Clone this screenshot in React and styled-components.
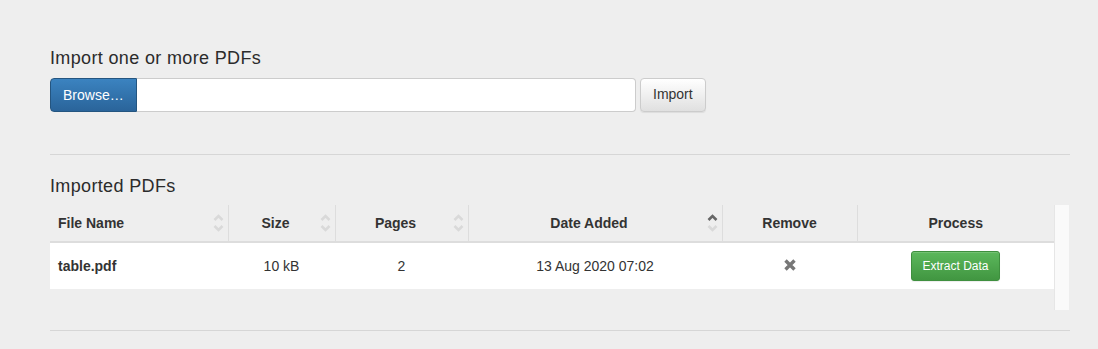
import React from "react";
import styled, { createGlobalStyle } from "styled-components";

const GlobalStyle = createGlobalStyle`
  body {
    margin: 0;
    background: #eeeeee;
    font-family: "Liberation Sans", Arial, sans-serif;
    font-size: 14px;
    color: #333;
  }
`;

const Page = styled.div`
  padding: 49px 28px 20px 50px;
  width: 1020px;
`;

const Heading = styled.h4`
  margin: 0 0 ${(p) => p.$gap || "9px"};
  font-size: 18px;
  font-weight: 500;
  line-height: 1.1;
  letter-spacing: 0.35px;
  color: #2b2b2b;
`;

const FormRow = styled.div`
  display: flex;
  align-items: stretch;
  gap: 4px;
  height: 34px;
`;

const InputGroup = styled.div`
  display: flex;
  width: 586px;
`;

const BrowseButton = styled.span`
  display: flex;
  align-items: center;
  padding: 0 12px;
  color: #fff;
  background: linear-gradient(#3b83c0, #2a649a);
  border: 1px solid #245580;
  border-radius: 4px 0 0 4px;
  white-space: nowrap;
`;

const FileInput = styled.div`
  flex: 1;
  background: #fff;
  border: 1px solid #ccc;
  border-left: none;
  border-radius: 0 4px 4px 0;
`;

const Button = styled.button`
  font-family: inherit;
  font-size: ${(p) => (p.$small ? "12px" : "14px")};
  line-height: ${(p) => (p.$small ? "1.5" : "1.42857")};
  padding: ${(p) => (p.$small ? "5px 10px" : "6px 12px")};
  border-radius: ${(p) => (p.$small ? "3px" : "4px")};
  color: ${(p) => (p.$success ? "#fff" : "#333")};
  border: 1px solid ${(p) => (p.$success ? "#3e8f3e" : "#ccc")};
  background: ${(p) =>
    p.$success
      ? "linear-gradient(#5cb85c, #419641)"
      : "linear-gradient(#ffffff, #e0e0e0)"};
  box-shadow: inset 0 1px 0 rgba(255, 255, 255, 0.15),
    0 1px 1px rgba(0, 0, 0, 0.075);
  cursor: pointer;
`;

const Rule = styled.hr`
  margin: ${(p) => p.$margin};
  border: 0;
  border-top: 1px solid #d6d6d6;
  height: 0;
`;

const TableWrap = styled.div`
  display: flex;
  align-items: flex-start;
`;

const Table = styled.table`
  width: 1004px;
  table-layout: fixed;
  border-collapse: collapse;
`;

const HeadCell = styled.th`
  position: relative;
  height: 36px;
  box-sizing: border-box;
  padding: ${(p) => (p.$sortable ? "8px 20px 8px 8px" : "8px")};
  text-align: ${(p) => p.$align || "center"};
  font-weight: bold;
  line-height: 20px;
  border-left: ${(p) => (p.$first ? "none" : "1px solid #dddddd")};
  border-bottom: 2px solid #dddddd;
`;

const SortIcon = styled.svg`
  position: absolute;
  right: 4px;
  top: 8px;
`;

const Row = styled.tr`
  background: #fff;
`;

const Cell = styled.td`
  height: 46px;
  box-sizing: border-box;
  padding: 8px;
  text-align: ${(p) => p.$align || "center"};
  font-weight: ${(p) => (p.$bold ? "bold" : "normal")};
  vertical-align: middle;
  line-height: 20px;
`;

const ScrollTrack = styled.div`
  width: 14px;
  height: 105px;
  background: #fafafa;
  border-left: 1px solid #e6e6e6;
`;

const Sort = ({ active }) => (
  <SortIcon width="11" height="20" viewBox="0 0 11 20" fill="none">
    <polyline
      points="1.5,7 5.5,3 9.5,7"
      stroke={active ? "#666" : "#d9d9d9"}
      strokeWidth="2.6"
    />
    <polyline
      points="1.5,13 5.5,17 9.5,13"
      stroke="#d9d9d9"
      strokeWidth="2.6"
    />
  </SortIcon>
);

const RemoveIcon = () => (
  <svg width="12" height="12" viewBox="0 0 12 12">
    <path
      d="M1.5 1.5 L10.5 10.5 M10.5 1.5 L1.5 10.5"
      stroke="#777"
      strokeWidth="3.4"
    />
  </svg>
);

const columns = [
  { label: "File Name", width: 178, sortable: true, align: "left" },
  { label: "Size", width: 107, sortable: true },
  { label: "Pages", width: 133, sortable: true },
  { label: "Date Added", width: 254, sortable: true, active: true },
  { label: "Remove", width: 135 },
  { label: "Process", width: 197 },
];

export default function App() {
  return (
    <>
      <GlobalStyle />
      <Page>
        <Heading>Import one or more PDFs</Heading>
        <FormRow>
          <InputGroup>
            <BrowseButton>Browse…</BrowseButton>
            <FileInput />
          </InputGroup>
          <Button>Import</Button>
        </FormRow>

        <Rule $margin="42px 0 22px" />

        <Heading $gap="8px">Imported PDFs</Heading>
        <TableWrap>
          <Table>
            <colgroup>
              {columns.map((c) => (
                <col key={c.label} style={{ width: c.width }} />
              ))}
            </colgroup>
            <thead>
              <tr>
                {columns.map((c, i) => (
                  <HeadCell
                    key={c.label}
                    $first={i === 0}
                    $sortable={c.sortable}
                    $align={c.align}
                  >
                    {c.label}
                    {c.sortable && <Sort active={c.active} />}
                  </HeadCell>
                ))}
              </tr>
            </thead>
            <tbody>
              <Row>
                <Cell $align="left" $bold>
                  table.pdf
                </Cell>
                <Cell>10 kB</Cell>
                <Cell>2</Cell>
                <Cell>13 Aug 2020 07:02</Cell>
                <Cell>
                  <RemoveIcon />
                </Cell>
                <Cell>
                  <Button $small $success>
                    Extract Data
                  </Button>
                </Cell>
              </Row>
            </tbody>
          </Table>
          <ScrollTrack />
        </TableWrap>

        <Rule $margin="20px 0 0" />
      </Page>
    </>
  );
}
